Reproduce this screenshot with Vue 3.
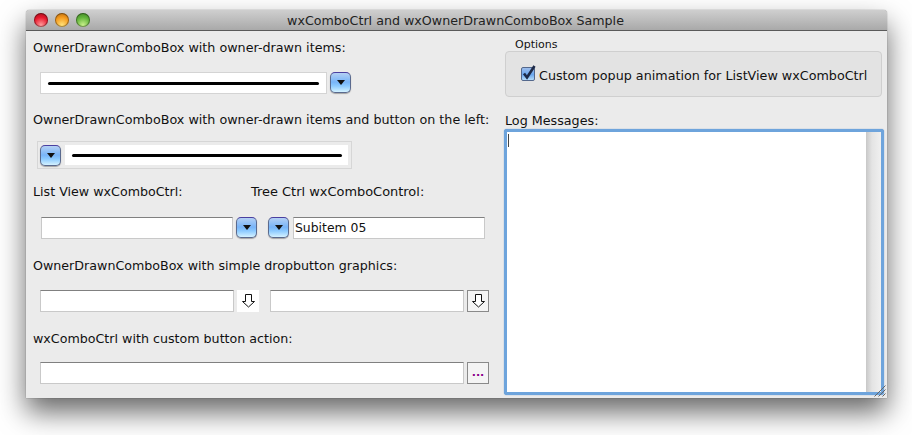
<template>
  <div class="window">
    <div class="titlebar">
      <div class="lights">
        <span class="light light--red"></span>
        <span class="light light--amber"></span>
        <span class="light light--green"></span>
      </div>
      <span class="title">wxComboCtrl and wxOwnerDrawnComboBox Sample</span>
    </div>
    <div class="content">
      <div class="left">
        <div class="label l1">OwnerDrawnComboBox with owner-drawn items:</div>
        <div class="row r1">
          <div class="linebox linebox--a"><span class="stroke"></span></div>
          <button class="aqua"><span class="tri"></span></button>
        </div>
        <div class="label l2">OwnerDrawnComboBox with owner-drawn items and button on the left:</div>
        <div class="frame">
          <button class="aqua"><span class="tri"></span></button>
          <div class="linebox linebox--b"><span class="stroke"></span></div>
        </div>
        <div class="label l3 pair">
          <span class="pair-a">List View wxComboCtrl:</span>
          <span class="pair-b">Tree Ctrl wxComboControl:</span>
        </div>
        <div class="row r3">
          <div class="field f192"></div>
          <button class="aqua aqua--a"><span class="tri"></span></button>
          <button class="aqua aqua--b"><span class="tri"></span></button>
          <div class="field f192 field--text">Subitem 05</div>
        </div>
        <div class="label l4">OwnerDrawnComboBox with simple dropbutton graphics:</div>
        <div class="row r4">
          <div class="field f194"></div>
          <button class="plain plain--flat"><svg width="13" height="14" viewBox="0 0 13 14"><path d="M3.500 .5h6v7h3L6.500 13 .5 7.500h3z" fill="#fff" stroke="#111"/></svg></button>
          <div class="field f194 gap-b"></div>
          <button class="plain"><svg width="13" height="14" viewBox="0 0 13 14"><path d="M3.500 .5h6v7h3L6.500 13 .5 7.500h3z" fill="#fff" stroke="#111"/></svg></button>
        </div>
        <div class="label l5">wxComboCtrl with custom button action:</div>
        <div class="row r5">
          <div class="field f424"></div>
          <button class="plain dots">...</button>
        </div>
      </div>
      <div class="right">
        <div class="legend">Options</div>
        <div class="group">
          <span class="check">
            <svg width="16" height="17" viewBox="0 0 16 17"><path d="M3 8.500l3 4L13.500 1" fill="none" stroke="#1d2a48" stroke-width="2.600"/></svg>
          </span>
          <span class="check-label">Custom popup animation for ListView wxComboCtrl</span>
        </div>
        <div class="label log-label">Log Messages:</div>
        <div class="log">
          <div class="log-text"><span class="caret"></span></div>
          <div class="log-scroll"></div>
        </div>
      </div>
    </div>
    <svg class="grip" width="12" height="12" viewBox="0 0 12 12"><path d="M11.500 .5L.5 11.500M11.500 4.500L4.500 11.500M11.500 8.500L8.500 11.500" stroke="#666" fill="none"/></svg>
  </div>
</template>

<script setup>
</script>

<style>
html, body { background: #fff; margin: 0; }
body { height: 435px; overflow: hidden; }
</style>

<style scoped>
.window {
  position: relative;
  box-sizing: border-box;
  width: 861px;
  height: 388px;
  margin: 10px 0 0 26px;
  background: #ebebeb;
  border-radius: 4px 4px 0 0;
  box-shadow: 0 14px 28px rgba(0, 0, 0, .6), 0 0 1px rgba(0, 0, 0, .7);
  font-family: "DejaVu Sans", sans-serif;
  font-size: 12.72px;
  color: #111;
}
.titlebar {
  position: relative;
  display: flex;
  align-items: center;
  justify-content: center;
  height: 20px;
  background: linear-gradient(#cfcfcf, #a9a9a9);
  border-bottom: 1px solid #5a5a5a;
  border-radius: 4px 4px 0 0;
}
.title { font-size: 12.66px; color: #222; margin-right: 2px; }
.lights {
  position: absolute;
  left: 8px;
  top: 3px;
  display: flex;
  gap: 7px;
}
.light {
  width: 14px;
  height: 14px;
  border-radius: 50%;
  box-shadow: inset 0 0 0 1px rgba(0, 0, 0, .35);
}
.light--red { background: radial-gradient(circle at 50% 85%, #ff9a9a, #e8182c 55%, #8e0d18); }
.light--amber { background: radial-gradient(circle at 50% 85%, #ffe27a, #f59a1c 55%, #a8600c); }
.light--green { background: radial-gradient(circle at 50% 85%, #c8f08a, #62b43a 55%, #3a7a22); }

.content { display: flex; }
.left { width: 479px; padding: 8px 0 0 7px; box-sizing: border-box; }

.label { height: 18px; line-height: 18px; white-space: nowrap; }
.l2 { margin-top: 17px; }
.l3 { margin-top: 14px; }
.l4 { margin-top: 18px; font-size: 12.66px; }
.l5 { margin-top: 18px; font-size: 12.66px; }
.pair { display: flex; }
.pair-a { width: 218px; font-size: 12.66px; }
.pair-b { font-size: 12.95px; }

.row { display: flex; }
.r1 { margin: 15px 0 0 7px; }
.r3 { margin: 16px 0 0 8px; }
.r4 { margin: 15px 0 0 7px; }
.r5 { margin: 14px 0 0 7px; }

.linebox {
  display: flex;
  align-items: center;
  box-sizing: border-box;
  background: #fff;
}
.linebox--a { width: 287px; height: 22px; padding: 0 7px; border: 1px solid #d4d4d4; }
.linebox--b { width: 283px; height: 20px; margin-left: 4px; padding: 0 6px 0 7px; }
.stroke { display: block; width: 100%; height: 3px; background: #000; border-radius: 2px; }

.frame {
  display: flex;
  align-items: flex-start;
  box-sizing: border-box;
  width: 315px;
  height: 28px;
  margin: 12px 0 0 4px;
  padding: 3px 0 0 2px;
  border: 1px solid #d6d6d6;
}

.aqua {
  display: flex;
  align-items: center;
  justify-content: center;
  box-sizing: border-box;
  width: 21px;
  height: 21px;
  margin: 0;
  padding: 0;
  border: 1px solid #5a6a8e;
  border-top-color: #4a3fa0;
  border-radius: 5px;
  background: linear-gradient(#b4d0f4, #78b4f8 48%, #8ccaff 68%, #d4f2ff);
  box-shadow: 0 1px 1px rgba(0, 0, 0, .3);
}
.r1 .aqua { margin-left: 3px; }
.aqua--a { margin-left: 3px; }
.aqua--b { margin-left: 11px; }
.tri {
  width: 0;
  height: 0;
  border: 4px solid transparent;
  border-top: 5px solid #111;
  border-bottom: 0;
}

.field {
  box-sizing: border-box;
  height: 22px;
  background: #fff;
  border: 1px solid #c9c9c9;
  border-top-color: #808080;
}
.f192 { width: 192px; }
.f194 { width: 194px; }
.f424 { width: 424px; }
.field--text { margin-left: 4px; padding-left: 1px; font-size: 12.4px; line-height: 20px; }
.gap-b { margin-left: 11px; }

.plain {
  display: flex;
  align-items: center;
  justify-content: center;
  box-sizing: border-box;
  width: 22px;
  height: 22px;
  margin: 0 0 0 3px;
  padding: 0;
  background: #f4f4f4;
  border: 1px solid #8a8a8a;
}
.plain--flat { background: #fff; border-color: #fff; }
.dots {
  align-items: flex-end;
  padding-bottom: 4px;
  font-family: inherit;
  font-size: 11px;
  font-weight: bold;
  line-height: 12px;
  color: #8a008a;
}

.legend { margin: 7px 0 0 10px; height: 13px; font-size: 11px; line-height: 13px; }
.group {
  display: flex;
  align-items: center;
  box-sizing: border-box;
  width: 377px;
  height: 46px;
  padding: 0 0 0 15px;
  background: #e3e3e3;
  border: 1px solid #cfcfcf;
  border-radius: 4px;
}
.check {
  position: relative;
  box-sizing: border-box;
  width: 14px;
  height: 14px;
  margin-right: 4px;
  background: linear-gradient(#9dbdec, #6aa6ee 55%, #b4dcfa);
  border: 1px solid #54688c;
  border-radius: 2px;
}
.check svg { position: absolute; left: -1px; top: -3px; }
.check-label { padding-top: 2px; }
.log-label { margin-top: 15px; height: 17px; }
.log {
  display: flex;
  box-sizing: border-box;
  width: 380px;
  height: 266px;
  margin: 0 0 0 -1px;
  border: 3px solid #6ea4dc;
  border-radius: 3px;
  box-shadow: 0 0 1px #3f7fc4;
  background: #fff;
}
.log-text { flex: 1; background: #fff; padding: 2px 0 0 1px; }
.log-scroll { width: 15px; background: linear-gradient(90deg, #c8c8c8, #e4e4e4 40%, #f0f0f0); }
.caret { display: block; width: 1px; height: 13px; background: #444; }
.grip { position: absolute; right: 1px; bottom: 1px; }
</style>
